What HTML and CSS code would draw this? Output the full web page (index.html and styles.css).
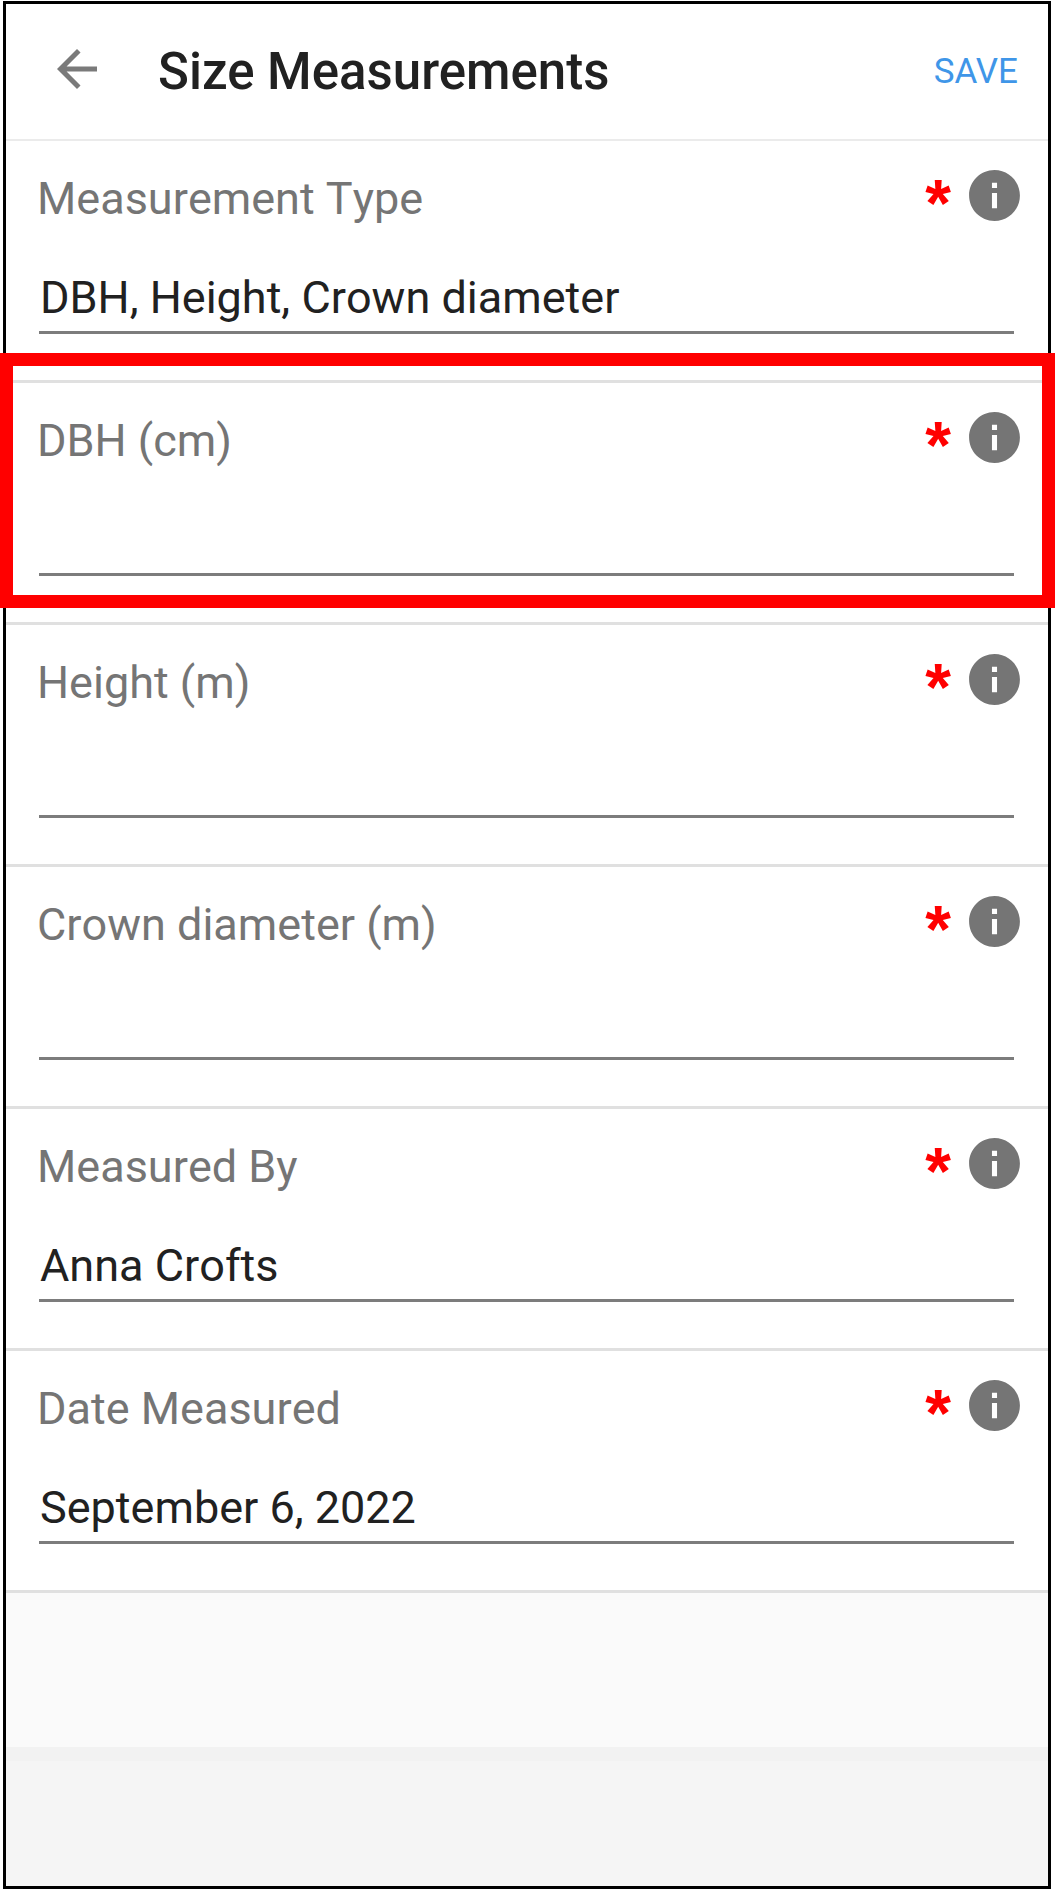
FILE: index.html
```html
<!DOCTYPE html>
<html lang="en">
<head>
    <meta charset="UTF-8">
    <meta name="viewport" content="width=device-width, initial-scale=1.0">
    <title>Size Measurements</title>
    <link rel="stylesheet" href="styles.css">
</head>
<body>
    <!-- shared info icon -->
    <svg class="sprite" aria-hidden="true">
        <symbol id="icon-info" viewBox="0 0 24 24">
            <path d="M12 2C6.48 2 2 6.48 2 12s4.48 10 10 10 10-4.48 10-10S17.52 2 12 2zm1 15h-2v-6h2v6zm0-8h-2V7h2v2z"/>
        </symbol>
    </svg>

    <form class="screen">
        <header class="toolbar">
            <button type="button" class="back-btn" aria-label="Back">
                <svg class="icon" viewBox="0 0 24 24"><path d="M20 11H7.83l5.59-5.59L12 4l-8 8 8 8 1.41-1.41L7.83 13H20v-2z"/></svg>
            </button>
            <h1>Size Measurements</h1>
            <button type="submit" class="save-btn">SAVE</button>
        </header>

        <div class="field">
            <div class="field-head">
                <label for="type">Measurement Type</label>
                <span class="required">*</span>
                <button type="button" class="info-btn" aria-label="About measurement type"><svg class="icon"><use href="#icon-info"/></svg></button>
            </div>
            <input type="text" id="type" value="DBH, Height, Crown diameter">
        </div>

        <div class="field highlighted">
            <div class="field-head">
                <label for="dbh">DBH (cm)</label>
                <span class="required">*</span>
                <button type="button" class="info-btn" aria-label="About DBH"><svg class="icon"><use href="#icon-info"/></svg></button>
            </div>
            <input type="text" id="dbh" inputmode="decimal">
        </div>

        <div class="field">
            <div class="field-head">
                <label for="height">Height (m)</label>
                <span class="required">*</span>
                <button type="button" class="info-btn" aria-label="About height"><svg class="icon"><use href="#icon-info"/></svg></button>
            </div>
            <input type="text" id="height" inputmode="decimal">
        </div>

        <div class="field">
            <div class="field-head">
                <label for="crown">Crown diameter (m)</label>
                <span class="required">*</span>
                <button type="button" class="info-btn" aria-label="About crown diameter"><svg class="icon"><use href="#icon-info"/></svg></button>
            </div>
            <input type="text" id="crown" inputmode="decimal">
        </div>

        <div class="field">
            <div class="field-head">
                <label for="measuredBy">Measured By</label>
                <span class="required">*</span>
                <button type="button" class="info-btn" aria-label="About measured by"><svg class="icon"><use href="#icon-info"/></svg></button>
            </div>
            <input type="text" id="measuredBy" value="Anna Crofts">
        </div>

        <div class="field">
            <div class="field-head">
                <label for="date">Date Measured</label>
                <span class="required">*</span>
                <button type="button" class="info-btn" aria-label="About date measured"><svg class="icon"><use href="#icon-info"/></svg></button>
            </div>
            <input type="text" id="date" value="September 6, 2022">
        </div>

        <div class="spacer"></div>
        <footer class="nav-area"></footer>
    </form>
</body>
</html>
```
FILE: styles.css
```css
* {
    box-sizing: border-box;
}

body {
    margin: 0;
    padding: 1px 4px 1px 3px;
    min-height: 100vh;
    display: flex;
    background-color: #ffffff;
    color: #212121;
    font-family: Roboto, sans-serif;
}

button {
    padding: 0;
    border: none;
    background: none;
    font-family: inherit;
    cursor: pointer;
}

.sprite {
    display: none;
}

.icon {
    display: block;
    width: 100%;
    height: 100%;
    fill: currentColor;
}

.screen {
    flex: 1;
    min-width: 0;
    display: flex;
    flex-direction: column;
    border: 3px solid #000000;
    background-color: #fafafa;
}

/* top bar */
.toolbar {
    display: flex;
    align-items: center;
    padding: 35px 30px 40px 41px;
    border-bottom: 2px solid #ebebeb;
    background-color: #ffffff;
}

.back-btn {
    width: 60px;
    height: 60px;
    color: #7a7a7a;
}

h1 {
    flex: 1;
    margin: 0 0 0 51px;
    padding-top: 6px;
    font-size: 51px;
    line-height: 54px;
    font-weight: 500;
}

.save-btn {
    padding-top: 6px;
    color: #3f96e8;
    font-size: 35px;
    line-height: 54px;
}

/* form rows */
.field {
    padding: 24px 34px 46px 33px;
    border-bottom: 3px solid #e0e0e0;
    background-color: #ffffff;
}

.field-head {
    display: flex;
    align-items: center;
    margin: 0 -11px 38px -2px;
}

.field label {
    flex: 1;
    padding-top: 6px;
    color: #757575;
    font-size: 45px;
    line-height: 54px;
    font-kerning: none;
}

.required {
    padding-top: 14px;
    margin-right: 13px;
    color: #ff0000;
    font-family: "Liberation Sans", Arial, sans-serif;
    font-size: 66px;
    line-height: 40px;
    font-weight: 700;
}

.info-btn {
    width: 61px;
    height: 61px;
    color: #757575;
}

.field input {
    display: block;
    width: 100%;
    height: 70px;
    padding: 0 0 0 1px;
    border: none;
    border-bottom: 3px solid #7c7c7c;
    border-radius: 0;
    outline: none;
    background: none;
    color: #212121;
    font-family: inherit;
    font-size: 45px;
    font-kerning: none;
}

/* red frame around the field being described */
.highlighted {
    position: relative;
}

.highlighted::after {
    content: "";
    position: absolute;
    top: -30px;
    right: -7px;
    bottom: 14px;
    left: -6px;
    border: 13px solid #ff0000;
    pointer-events: none;
}

/* bottom of the screen */
.spacer {
    flex: 1;
}

.nav-area {
    height: 139px;
    border-top: 14px solid #f2f2f2;
    background-color: #f5f5f5;
}
```
